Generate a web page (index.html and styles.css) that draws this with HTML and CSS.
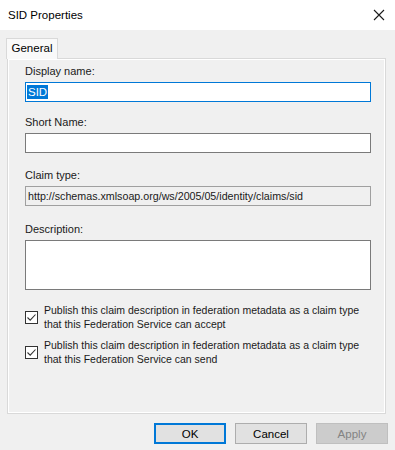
FILE: index.html
```html
<!DOCTYPE html>
<html lang="en">
<head>
    <meta charset="UTF-8">
    <title>SID Properties</title>
    <link rel="stylesheet" href="styles.css">
</head>
<body>
    <div class="dialog">
        <div class="titlebar">
            <span class="title">SID Properties</span>
            <span class="close">
                <svg width="12" height="12" viewBox="0 0 12 12"><path d="M1 1 L11 11 M11 1 L1 11" stroke="#1a1a1a" stroke-width="1.1" fill="none"/></svg>
            </span>
        </div>
        <div class="body">
            <div class="tabs">
                <div class="tab active">General</div>
            </div>
            <div class="panel">
                <div class="field field-display">
                    <div class="label">Display name:</div>
                    <div class="textbox focused"><span class="selected">SID</span></div>
                </div>
                <div class="field field-short">
                    <div class="label">Short Name:</div>
                    <div class="textbox"></div>
                </div>
                <div class="field field-claim">
                    <div class="label">Claim type:</div>
                    <div class="textbox readonly">http://schemas.xmlsoap.org/ws/2005/05/identity/claims/sid</div>
                </div>
                <div class="field field-desc">
                    <div class="label">Description:</div>
                    <div class="textbox multiline"></div>
                </div>
                <div class="check check-accept">
                    <span class="box"><svg width="11" height="11" viewBox="0 0 11 11"><path d="M1.5 5.5 L4.2 8.2 L9.5 2.5" stroke="#333" stroke-width="1.1" fill="none"/></svg></span>
                    <span class="check-text">Publish this claim description in federation metadata as a claim type<br>that this Federation Service can accept</span>
                </div>
                <div class="check check-send">
                    <span class="box"><svg width="11" height="11" viewBox="0 0 11 11"><path d="M1.5 5.5 L4.2 8.2 L9.5 2.5" stroke="#333" stroke-width="1.1" fill="none"/></svg></span>
                    <span class="check-text">Publish this claim description in federation metadata as a claim type<br>that this Federation Service can send</span>
                </div>
            </div>
            <div class="buttons">
                <button class="btn default">OK</button>
                <button class="btn">Cancel</button>
                <button class="btn disabled">Apply</button>
            </div>
        </div>
    </div>
</body>
</html>
```

FILE: styles.css
```css
* {
    margin: 0;
    padding: 0;
    box-sizing: border-box;
    font-family: 'Liberation Sans', Arial, sans-serif;
}

body {
    background: #f0f0f0;
}

.dialog {
    width: 395px;
    height: 450px;
    background: #f0f0f0;
    font-size: 11px;
    color: #000;
}

.titlebar {
    height: 30px;
    background: #fff;
    display: flex;
    align-items: center;
    justify-content: space-between;
    padding: 0 10px 0 8px;
}

.title {
    font-size: 11.5px;
}

.close {
    display: flex;
    width: 12px;
    height: 12px;
}

.body {
    padding: 7px 9px 0 7px;
}

.tabs {
    display: flex;
    margin-left: -1px;
}

.tab {
    width: 52px;
    height: 21px;
    line-height: 19px;
    text-align: center;
    border: 1px solid #d9d9d9;
    border-bottom: none;
    background: #f9f9f9;
    position: relative;
    top: 1px;
    font-size: 11.5px;
}

.panel {
    height: 356px;
    border: 1px solid #d9d9d9;
    box-shadow: inset 1px 1px 0 #fff, inset -1px -1px 0 #fff;
    padding: 5px 14px 0 17px;
}

.label {
    line-height: 14px;
    margin-bottom: 4px;
    color: #1a1a1a;
}

.field-display { margin-bottom: 13px; }
.field-short { margin-bottom: 15px; }
.field-claim { margin-bottom: 16px; }
.field-desc { margin-bottom: 14px; }

.textbox {
    height: 20px;
    border: 1px solid #7a7a7a;
    background: #fff;
    padding: 2px 1px;
    line-height: 14px;
    white-space: nowrap;
    overflow: hidden;
}

.textbox.focused {
    border-color: #0078d7;
    font-size: 11.5px;
}

.textbox.readonly {
    background: #f0f0f0;
    border-color: #a0a0a0;
    padding-left: 2px;
    color: #1a1a1a;
    font-size: 10.7px;
}

.textbox.multiline {
    height: 50px;
}

.selected {
    background: #0078d7;
    color: #fff;
    padding: 1px 1px;
}

.check {
    display: flex;
    align-items: center;
    gap: 6px;
    line-height: 13.5px;
    color: #1a1a1a;
}

.check-text {
    font-size: 10.5px;
    white-space: nowrap;
}

.check-send {
    margin-top: 8px;
}

.box {
    flex: none;
    width: 13px;
    height: 13px;
    border: 1px solid #333;
    background: #fff;
    display: flex;
    align-items: center;
    justify-content: center;
}

.buttons {
    display: flex;
    justify-content: flex-end;
    gap: 9px;
    margin-top: 9px;
    margin-right: -2px;
}

.btn {
    width: 72px;
    height: 21px;
    background: #e1e1e1;
    border: 1px solid #adadad;
    font-size: 11.5px;
    color: #000;
}

.btn.default {
    border: 2px solid #0078d7;
}

.btn.disabled {
    background: #cccccc;
    border-color: #bfbfbf;
    color: #838383;
}
```
